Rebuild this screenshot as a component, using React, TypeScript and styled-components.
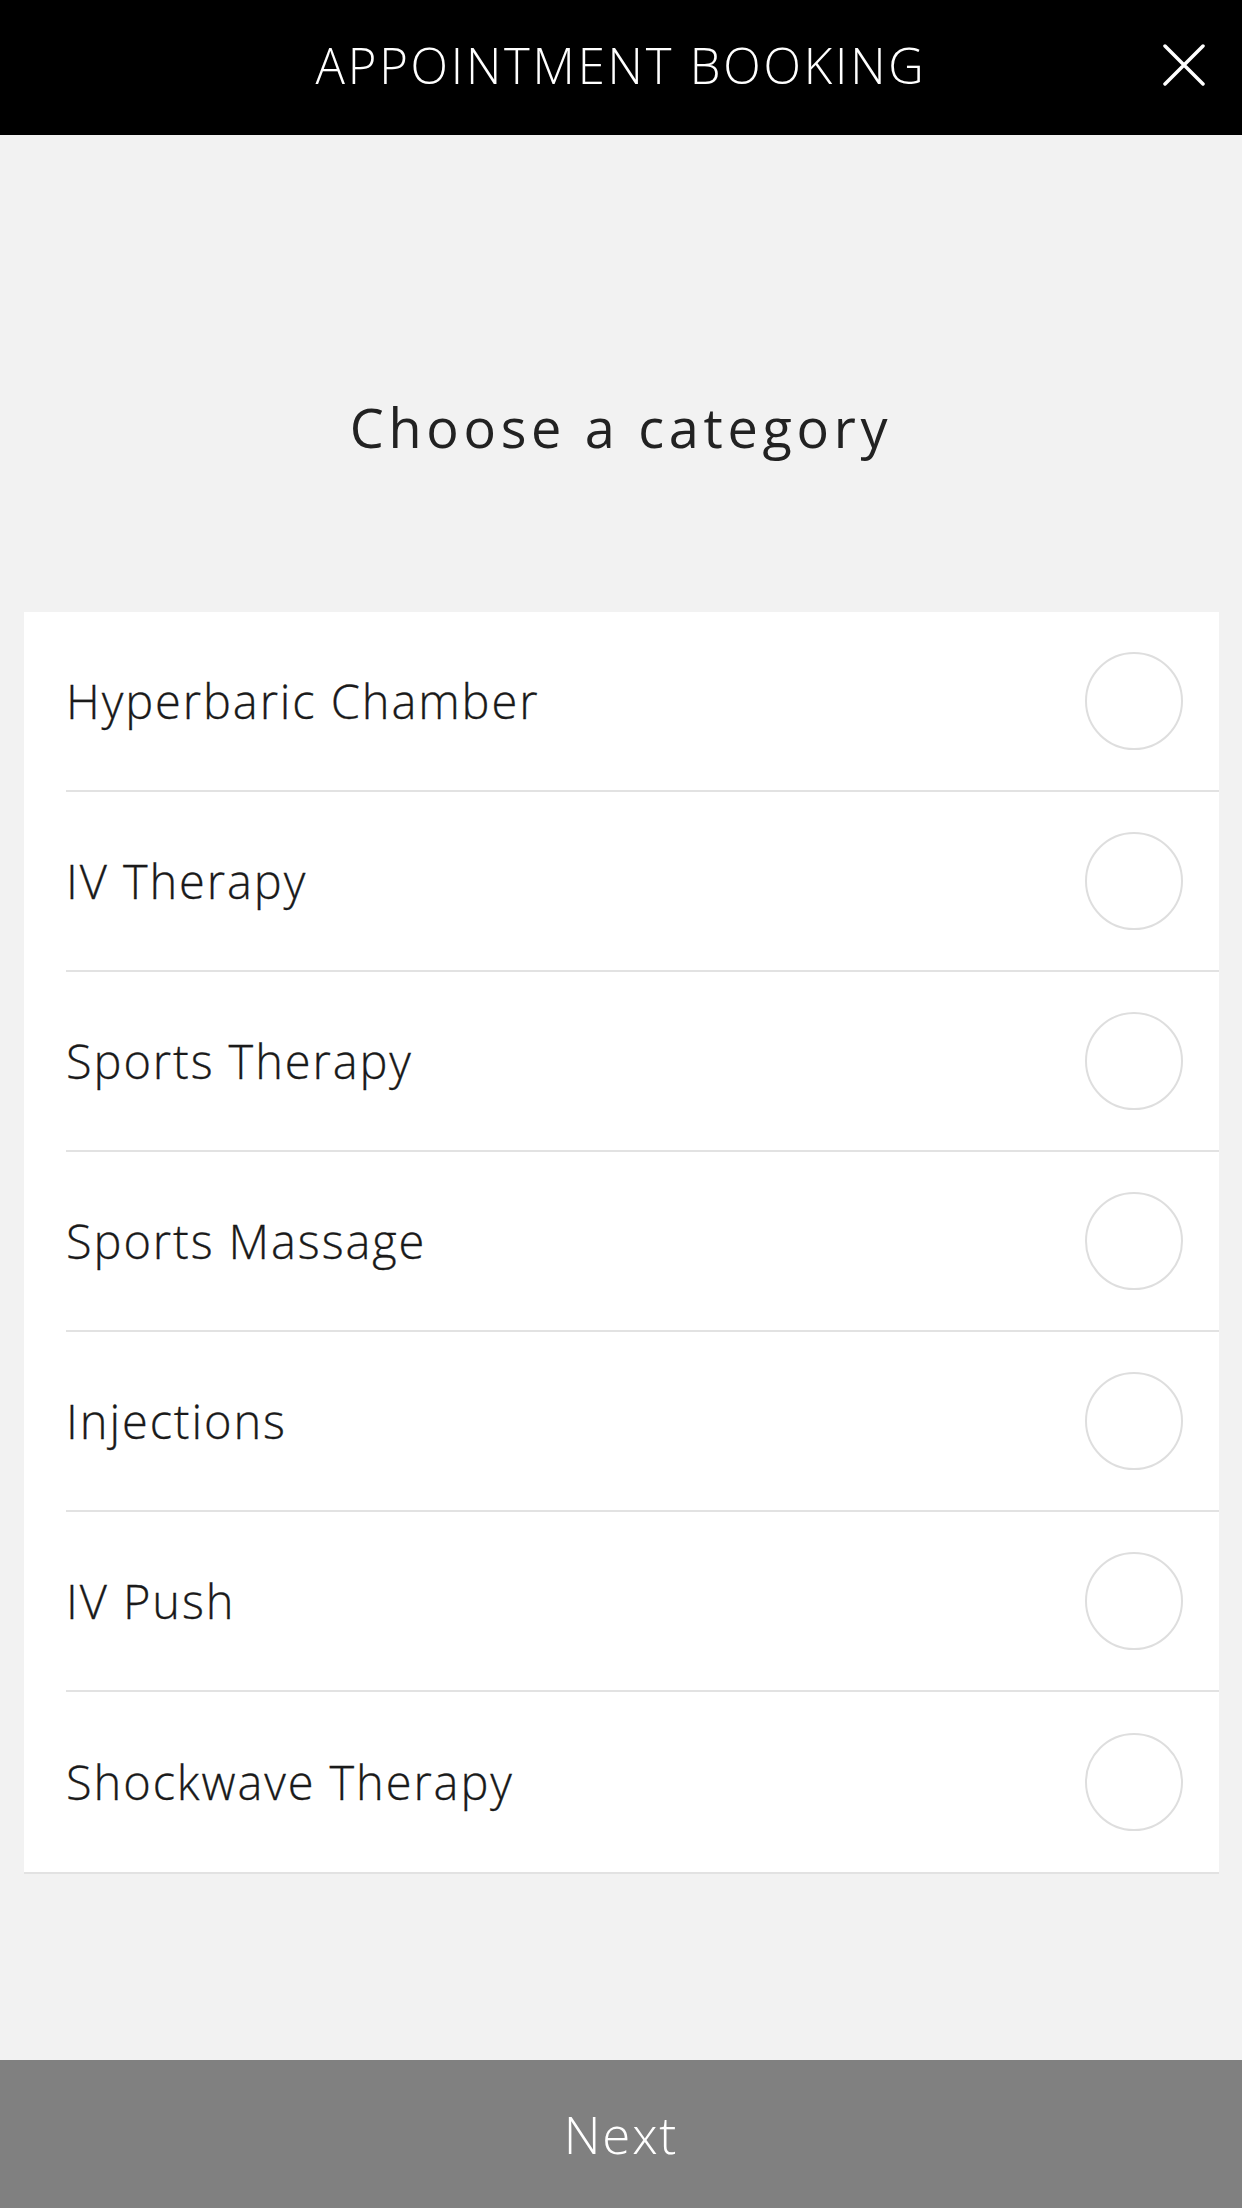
import styled, { createGlobalStyle } from "styled-components";

const GlobalStyle = createGlobalStyle`
  html, body {
    margin: 0;
    padding: 0;
    background: #f2f2f2;
  }
  * {
    box-sizing: border-box;
  }
`;

const Page = styled.div`
  display: flex;
  flex-direction: column;
  min-height: 100vh;
  font-family: "Open Sans", "Noto Sans", sans-serif;
  background: #f2f2f2;
`;

const Header = styled.header`
  position: relative;
  height: 135px;
  background: #000;
  display: flex;
  align-items: center;
  justify-content: center;
`;

const HeaderTitle = styled.h1`
  margin: 0 0 6px;
  color: #fff;
  font-size: 49px;
  font-weight: 300;
  letter-spacing: 2.8px;
`;

const CloseButton = styled.button`
  position: absolute;
  right: 36px;
  top: 44px;
  width: 44px;
  height: 42px;
  padding: 0;
  border: none;
  background: transparent;
  display: flex;
  align-items: center;
  justify-content: center;
  cursor: pointer;
`;

const Heading = styled.h2`
  margin: 252px 0 145px;
  height: 80px;
  line-height: 80px;
  text-align: center;
  font-size: 54px;
  font-weight: 400;
  letter-spacing: 4.7px;
  color: #222;
`;

const Card = styled.ul`
  list-style: none;
  margin: 0 23px 0 24px;
  padding: 0;
  background: #fff;
  border-bottom: 2px solid #e2e2e2;
`;

const Row = styled.li<{ $last?: boolean }>`
  display: flex;
  align-items: center;
  justify-content: space-between;
  height: 180px;
  margin-left: 42px;
  padding-right: 36px;
  border-bottom: ${(p) => (p.$last ? "none" : "2px solid #e2e2e2")};
`;

const Label = styled.span`
  font-size: 47px;
  font-weight: 300;
  letter-spacing: 1.9px;
  color: #1a1a1a;
  -webkit-text-stroke: 0.3px #1a1a1a;
`;

const Radio = styled.span`
  width: 98px;
  height: 98px;
  border-radius: 50%;
  border: 2px solid #dedede;
  background: #fff;
  flex-shrink: 0;
`;

const NextButton = styled.button`
  margin-top: auto;
  height: 148px;
  width: 100%;
  border: none;
  background: #808080;
  color: #fff;
  font-family: "Open Sans", "Noto Sans", sans-serif;
  font-size: 51px;
  font-weight: 300;
  letter-spacing: 1.8px;
  cursor: pointer;
`;

const categories = [
  "Hyperbaric Chamber",
  "IV Therapy",
  "Sports Therapy",
  "Sports Massage",
  "Injections",
  "IV Push",
  "Shockwave Therapy",
];

export default function App() {
  return (
    <>
      <GlobalStyle />
      <Page>
        <Header>
          <HeaderTitle>APPOINTMENT BOOKING</HeaderTitle>
          <CloseButton aria-label="Close">
            <svg width="42" height="42" viewBox="0 0 42 42">
              <path d="M2 2 L40 40 M40 2 L2 40" stroke="#fff" strokeWidth="3.5" strokeLinecap="round" />
            </svg>
          </CloseButton>
        </Header>

        <Heading>Choose a category</Heading>

        <Card>
          {categories.map((c, i) => (
            <Row key={c} $last={i === categories.length - 1}>
              <Label>{c}</Label>
              <Radio />
            </Row>
          ))}
        </Card>

        <NextButton>Next</NextButton>
      </Page>
    </>
  );
}
